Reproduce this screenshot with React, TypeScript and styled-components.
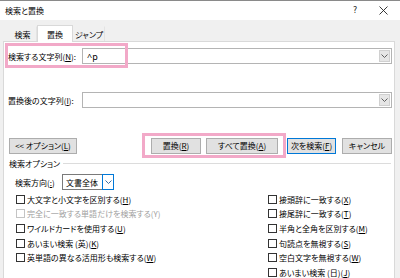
import React from "react";
import styled, { createGlobalStyle } from "styled-components";

const GlobalStyle = createGlobalStyle`
  html, body { margin: 0; padding: 0; background: #f0f0f0; }
  body {
    font-family: "Noto Sans CJK JP", "Noto Sans", sans-serif;
    font-size: 8px;
    font-feature-settings: "palt";
    color: #000;
  }
  * { box-sizing: border-box; }
`;

const Window = styled.div`
  width: 400px;
  height: 278px;
  overflow: hidden;
  background: #f0f0f0;
  border-top: 1px solid #8a8a8a;
  display: flex;
  flex-direction: column;
`;

const TitleBar = styled.div`
  height: 19px;
  background: #fff;
  display: flex;
  align-items: center;
  padding-left: 5px;
  flex-shrink: 0;
`;

const Title = styled.span`
  font-size: 8px;
  line-height: 1;
`;

const TitleButtons = styled.div`
  margin-left: auto;
  display: flex;
  align-items: center;
  height: 100%;
`;

const TitleButton = styled.span<{ $w: number }>`
  width: ${(p) => p.$w}px;
  height: 100%;
  display: flex;
  align-items: center;
  justify-content: center;
  font-family: "DejaVu Sans", sans-serif;
  font-size: 8px;
  color: #222;
`;

const Body = styled.div`
  flex: 1;
  display: flex;
  flex-direction: column;
  padding: 5px 5px 0 3px;
`;

const Tabs = styled.div`
  display: flex;
  align-items: flex-end;
  height: 16px;
  padding-left: 5px;
  position: relative;
  z-index: 1;
`;

const Tab = styled.div<{ $w: number; $active?: boolean }>`
  width: ${(p) => p.$w}px;
  height: ${(p) => (p.$active ? 17 : 15)}px;
  margin-bottom: ${(p) => (p.$active ? -1 : 0)}px;
  display: flex;
  align-items: center;
  justify-content: center;
  background: ${(p) => (p.$active ? "#fff" : "#f0f0f0")};
  border: 1px solid ${(p) => (p.$active ? "#d9d9d9" : "transparent")};
  border-bottom: none;
  ${(p) => (!p.$active ? "border-right: 1px solid #e3e3e3;" : "")}
  font-size: 8px;
  padding-top: 1px;
`;

const Panel = styled.div`
  flex: 1;
  background: #fff;
  border: 1px solid #d9d9d9;
  border-bottom: none;
  position: relative;
  display: flex;
  flex-direction: column;
  padding: 6px 1px 0 0;
`;

const Highlight = styled.div<{ $l: number; $t: number; $w: number; $h: number }>`
  position: absolute;
  left: ${(p) => p.$l}px;
  top: ${(p) => p.$t}px;
  width: ${(p) => p.$w}px;
  height: ${(p) => p.$h}px;
  border: 3px solid #f2a9c8;
  pointer-events: none;
`;

const FieldRow = styled.div<{ $mt?: number }>`
  display: flex;
  align-items: center;
  height: 16px;
  margin-top: ${(p) => p.$mt ?? 0}px;
  padding-left: 4px;
  padding-right: 1px;
`;

const FieldLabel = styled.label`
  width: 74px;
  flex-shrink: 0;
  white-space: nowrap;
`;

const U = styled.span`
  text-decoration: underline;
  text-underline-offset: 1px;
`;

const Combo = styled.div`
  flex: 1;
  height: 16px;
  border: 1px solid #b4b4b4;
  display: flex;
  align-items: stretch;
  justify-content: space-between;
  background: #fff;
  padding: 1px;
`;

const ComboText = styled.span`
  padding-left: 3px;
  display: flex;
  align-items: center;
  font-family: "Noto Sans", sans-serif;
  font-size: 9px;
`;

const ComboArrow = styled.span`
  width: 11px;
  background: #e6e6e6;
  border: 1px solid #d0d0d0;
  display: flex;
  align-items: center;
  justify-content: center;
`;

const ButtonRow = styled.div`
  display: flex;
  align-items: center;
  height: 25px;
  margin-top: 25px;
  padding-left: 5px;
  padding-right: 1px;
`;

const Button = styled.button<{ $w: number; $default?: boolean; $ml?: number }>`
  width: ${(p) => p.$w}px;
  height: 16px;
  margin-left: ${(p) => p.$ml ?? 0}px;
  padding: 0;
  background: #e1e1e1;
  border: 1px solid ${(p) => (p.$default ? "#0078d7" : "#adadad")};
  font-family: inherit;
  font-size: 8px;
  font-feature-settings: "palt";
  color: #000;
  display: flex;
  align-items: center;
  justify-content: center;
  flex-shrink: 0;
`;

const Spacer = styled.div`
  flex: 1;
`;

const PinkGroup = styled.div`
  width: 144px;
  height: 25px;
  border: 3px solid #f2a9c8;
  display: flex;
  align-items: center;
  padding-left: 6px;
  gap: 5px;
`;

const GroupHeader = styled.div`
  display: flex;
  align-items: center;
  height: 10px;
  padding-left: 5px;
  padding-right: 2px;
  gap: 3px;
`;

const GroupLine = styled.div`
  flex: 1;
  height: 1px;
  background: #dcdcdc;
`;

const DirectionRow = styled.div`
  display: flex;
  align-items: center;
  height: 16px;
  margin-top: 6px;
  padding-left: 11px;
`;

const DirectionLabel = styled.span`
  width: 47px;
`;

const Select = styled.div`
  width: 52px;
  height: 16px;
  border: 1px solid #7a7a7a;
  display: flex;
  align-items: stretch;
  background: #fff;
`;

const SelectText = styled.span`
  flex: 1;
  display: flex;
  align-items: center;
  padding-left: 3px;
`;

const SelectArrow = styled.span`
  width: 12px;
  border: 1px solid #0078d7;
  margin: -1px -1px -1px 0;
  display: flex;
  align-items: center;
  justify-content: center;
  background: #fff;
`;

const Columns = styled.div`
  display: flex;
  margin-top: 2px;
  padding-left: 12px;
`;

const Column = styled.div<{ $w?: number }>`
  display: flex;
  flex-direction: column;
  width: ${(p) => (p.$w ? `${p.$w}px` : "auto")};
`;

const CheckRow = styled.div<{ $disabled?: boolean }>`
  display: flex;
  align-items: center;
  height: 14.6px;
  gap: 2px;
  color: ${(p) => (p.$disabled ? "#a0a0a0" : "#000")};
  white-space: nowrap;
`;

const Box = styled.span<{ $disabled?: boolean }>`
  width: 9px;
  height: 9px;
  border: 1px solid ${(p) => (p.$disabled ? "#c4c4c4" : "#333")};
  background: #fff;
  flex-shrink: 0;
`;

const Chevron = ({ color = "#606060" }: { color?: string }) => (
  <svg width="7" height="4" viewBox="0 0 7 4">
    <path d="M0.5 0.5 L3.5 3.5 L6.5 0.5" fill="none" stroke={color} strokeWidth="1" />
  </svg>
);

const CloseIcon = () => (
  <svg width="9" height="9" viewBox="0 0 9 9">
    <path d="M0.5 0.5 L8.5 8.5 M8.5 0.5 L0.5 8.5" stroke="#222" strokeWidth="0.9" />
  </svg>
);

const Check = ({ children, disabled }: { children: React.ReactNode; disabled?: boolean }) => (
  <CheckRow $disabled={disabled}>
    <Box $disabled={disabled} />
    <span>{children}</span>
  </CheckRow>
);

export default function App() {
  return (
    <>
      <GlobalStyle />
      <Window>
        <TitleBar>
          <Title>検索と置換</Title>
          <TitleButtons>
            <TitleButton $w={30}>?</TitleButton>
            <TitleButton $w={26}>
              <CloseIcon />
            </TitleButton>
            <TitleButton $w={4} />
          </TitleButtons>
        </TitleBar>
        <Body>
          <Tabs>
            <Tab $w={29}>検索</Tab>
            <Tab $w={36} $active>
              置換
            </Tab>
            <Tab $w={32}>ジャンプ</Tab>
          </Tabs>
          <Panel>
            <Highlight $l={1} $t={1} $w={123} $h={25} />
            <FieldRow>
              <FieldLabel>
                検索する文字列(<U>N</U>):
              </FieldLabel>
              <Combo>
                <ComboText>^p</ComboText>
                <ComboArrow>
                  <Chevron />
                </ComboArrow>
              </Combo>
            </FieldRow>
            <FieldRow $mt={28}>
              <FieldLabel>
                置換後の文字列(<U>I</U>):
              </FieldLabel>
              <Combo>
                <ComboText />
                <ComboArrow>
                  <Chevron />
                </ComboArrow>
              </Combo>
            </FieldRow>
            <ButtonRow>
              <Button $w={68}>
                &lt;&lt; オプション(<U>L</U>)
              </Button>
              <Spacer />
              <PinkGroup>
                <Button $w={50}>
                  置換(<U>R</U>)
                </Button>
                <Button $w={72}>
                  すべて置換(<U>A</U>)
                </Button>
              </PinkGroup>
              <Button $w={49} $ml={1} $default>
                次を検索(<U>F</U>)
              </Button>
              <Button $w={50} $ml={6}>
                キャンセル
              </Button>
            </ButtonRow>
            <GroupHeader>
              <span>検索オプション</span>
              <GroupLine />
            </GroupHeader>
            <DirectionRow>
              <DirectionLabel>
                検索方向(<U>:</U>)
              </DirectionLabel>
              <Select>
                <SelectText>文書全体</SelectText>
                <SelectArrow>
                  <Chevron color="#3a6ea5" />
                </SelectArrow>
              </Select>
            </DirectionRow>
            <Columns>
              <Column $w={252}>
                <Check>
                  大文字と小文字を区別する(<U>H</U>)
                </Check>
                <Check disabled>完全に一致する単語だけを検索する(Y)</Check>
                <Check>
                  ワイルドカードを使用する(<U>U</U>)
                </Check>
                <Check>
                  あいまい検索 (英)(<U>K</U>)
                </Check>
                <Check>
                  英単語の異なる活用形も検索する(<U>W</U>)
                </Check>
              </Column>
              <Column>
                <Check>
                  接頭辞に一致する(<U>X</U>)
                </Check>
                <Check>
                  接尾辞に一致する(<U>T</U>)
                </Check>
                <Check>
                  半角と全角を区別する(<U>M</U>)
                </Check>
                <Check>
                  句読点を無視する(<U>S</U>)
                </Check>
                <Check>
                  空白文字を無視する(<U>W</U>)
                </Check>
                <Check>
                  あいまい検索 (日)(<U>J</U>)
                </Check>
              </Column>
            </Columns>
          </Panel>
        </Body>
      </Window>
    </>
  );
}
